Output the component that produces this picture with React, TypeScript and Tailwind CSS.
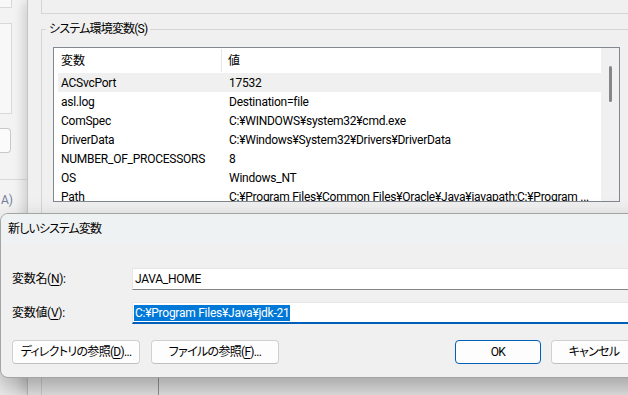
import React from "react";

const rows: [string, string][] = [
  ["ACSvcPort", "17532"],
  ["asl.log", "Destination=file"],
  ["ComSpec", "C:¥WINDOWS¥system32¥cmd.exe"],
  ["DriverData", "C:¥Windows¥System32¥Drivers¥DriverData"],
  ["NUMBER_OF_PROCESSORS", "8"],
  ["OS", "Windows_NT"],
  ["Path", "C:¥Program Files¥Common Files¥Oracle¥Java¥javapath;C:¥Program ..."],
];

function Btn({ children, w, primary }: { children: React.ReactNode; w: string; primary?: boolean }) {
  return (
    <div
      className={`${w} h-[24px] shrink-0 rounded-[4px] bg-[#fdfdfd] border flex items-center justify-center text-[12px] text-black whitespace-nowrap ${
        primary ? "border-[#005fb8]" : "border-[#d0d0d0] border-b-[#c0c0c0]"
      }`}
    >
      {children}
    </div>
  );
}

export default function App() {
  return (
    <div className="relative w-[628px] h-[395px] overflow-hidden bg-[#f0f0f0] font-['Roboto','Noto_Sans_CJK_JP',sans-serif] [font-feature-settings:'palt'] text-black leading-none">
      {/* Left window (System properties) */}
      <div className="absolute left-0 top-0 w-[27px] h-full bg-[#f3f3f3]">
        <div className="w-[12px] h-[8px] border-r border-b border-[#d8d8d8] bg-[#f8f8f8]" />
        <div className="mt-[15px] w-[12px] h-[91px] border-r border-t border-b border-[#d8d8d8] bg-[#f8f8f8]" />
        <div className="mt-[14px] w-[11px] h-[25px] border border-l-0 border-[#c8c8c8] rounded-r-[4px] bg-[#fbfbfb]" />
        <div className="mt-[26px] w-full h-[1px] bg-[#dadada]" />
        <div className="mt-[14px] pl-[1px] whitespace-nowrap text-[12px] text-[#72809c]">A)</div>
      </div>

      {/* Main window (Environment variables) */}
      <div className="absolute left-[27px] top-0 -right-[20px] h-full bg-[#f0f0f0] border-l border-[#c4c4c4] shadow-[-6px_0_10px_-2px_rgba(0,0,0,0.14)]">
        <div className="ml-[13px] h-[14px] border-l border-b border-[#d5d5d5]" />
        <fieldset className="mt-[7px] ml-[13px] border-l border-t border-[#d5d5d5]">
          <legend className="ml-[4px] px-[3px] text-[12px] leading-[16px] tracking-[-0.8px]">システム環境変数(S)</legend>
          <div className="mt-[10px] ml-[11px] w-[567px] h-[155px] border border-[#828790] bg-white flex">
            <div className="flex-1 flex flex-col overflow-hidden">
              <div className="h-[25px] shrink-0 flex items-center text-[12px]">
                <div className="w-[168px] shrink-0 pl-[7px] h-[23px] flex items-center border-r border-[#e5e5e5]">変数</div>
                <div className="pl-[6px]">値</div>
              </div>
              <div className="flex flex-col pl-[4px] tracking-[-0.25px]">
                {rows.map(([k, v], i) => (
                  <div
                    key={k}
                    className={`h-[19px] shrink-0 flex items-center text-[12px] whitespace-nowrap overflow-hidden ${
                      i === 0 ? "bg-[#f0f0f0]" : ""
                    }`}
                  >
                    <div className="w-[171px] shrink-0 pl-[3px]">{k}</div>
                    <div className="shrink-0">{v}</div>
                  </div>
                ))}
              </div>
            </div>
            <div className="w-[18px] shrink-0 bg-[#f0f0f0] flex flex-col items-center pt-[18px]">
              <div className="w-[3px] h-[36px] rounded-full bg-[#868686]" />
            </div>
          </div>
          <div className="mt-[175px] ml-[116px] h-[30px] border-l border-[#9a9a9a]" />
        </fieldset>
      </div>

      {/* Dialog: 新しいシステム変数 */}
      <div className="absolute left-0 top-[213px] w-[680px] h-[165px] rounded-[8px] bg-[#f0f0f0] border border-[#a4a4a4] shadow-[0_12px_26px_rgba(0,0,0,0.32)] flex flex-col overflow-hidden">
        <div className="h-[30px] shrink-0 bg-[#eff2f2] flex items-center pl-[7px] text-[12px] tracking-[-0.9px]">新しいシステム変数</div>
        <div className="flex flex-col pl-[11px] pt-[24px]">
          <div className="flex items-center">
            <div className="w-[120px] shrink-0 text-[12px] tracking-[-0.3px]">
              変数名(<span className="underline underline-offset-2">N</span>):
            </div>
            <div className="flex-1 h-[22px] bg-white border border-[#e5e5e5] border-b-[#868686] flex items-center pl-[2px] text-[12px] tracking-[-0.25px]">
              JAVA_HOME
            </div>
          </div>
          <div className="mt-[12px] flex items-center">
            <div className="w-[120px] shrink-0 text-[12px] tracking-[-0.3px]">
              変数値(<span className="underline underline-offset-2">V</span>):
            </div>
            <div className="flex-1 h-[22px] bg-white border border-[#e5e5e5] border-b-2 border-b-[#005fb8] flex items-center pl-[1px] text-[12px] tracking-[-0.25px]">
              <span className="bg-[#0078d7] text-white h-[16px] px-[1px] flex items-center">C:¥Program Files¥Java¥jdk-21</span>
            </div>
          </div>
          <div className="mt-[16px] flex items-center tracking-[-0.7px]">
            <Btn w="w-[128px]">
              ディレクトリの参照(<span className="underline underline-offset-2">D</span>)...
            </Btn>
            <div className="ml-[11px]">
              <Btn w="w-[128px]">
                ファイルの参照(<span className="underline underline-offset-2">F</span>)...
              </Btn>
            </div>
            <div className="ml-[176px]">
              <Btn w="w-[86px]" primary>
                OK
              </Btn>
            </div>
            <div className="ml-[10px]">
              <Btn w="w-[86px]">キャンセル</Btn>
            </div>
          </div>
        </div>
      </div>
    </div>
  );
}
